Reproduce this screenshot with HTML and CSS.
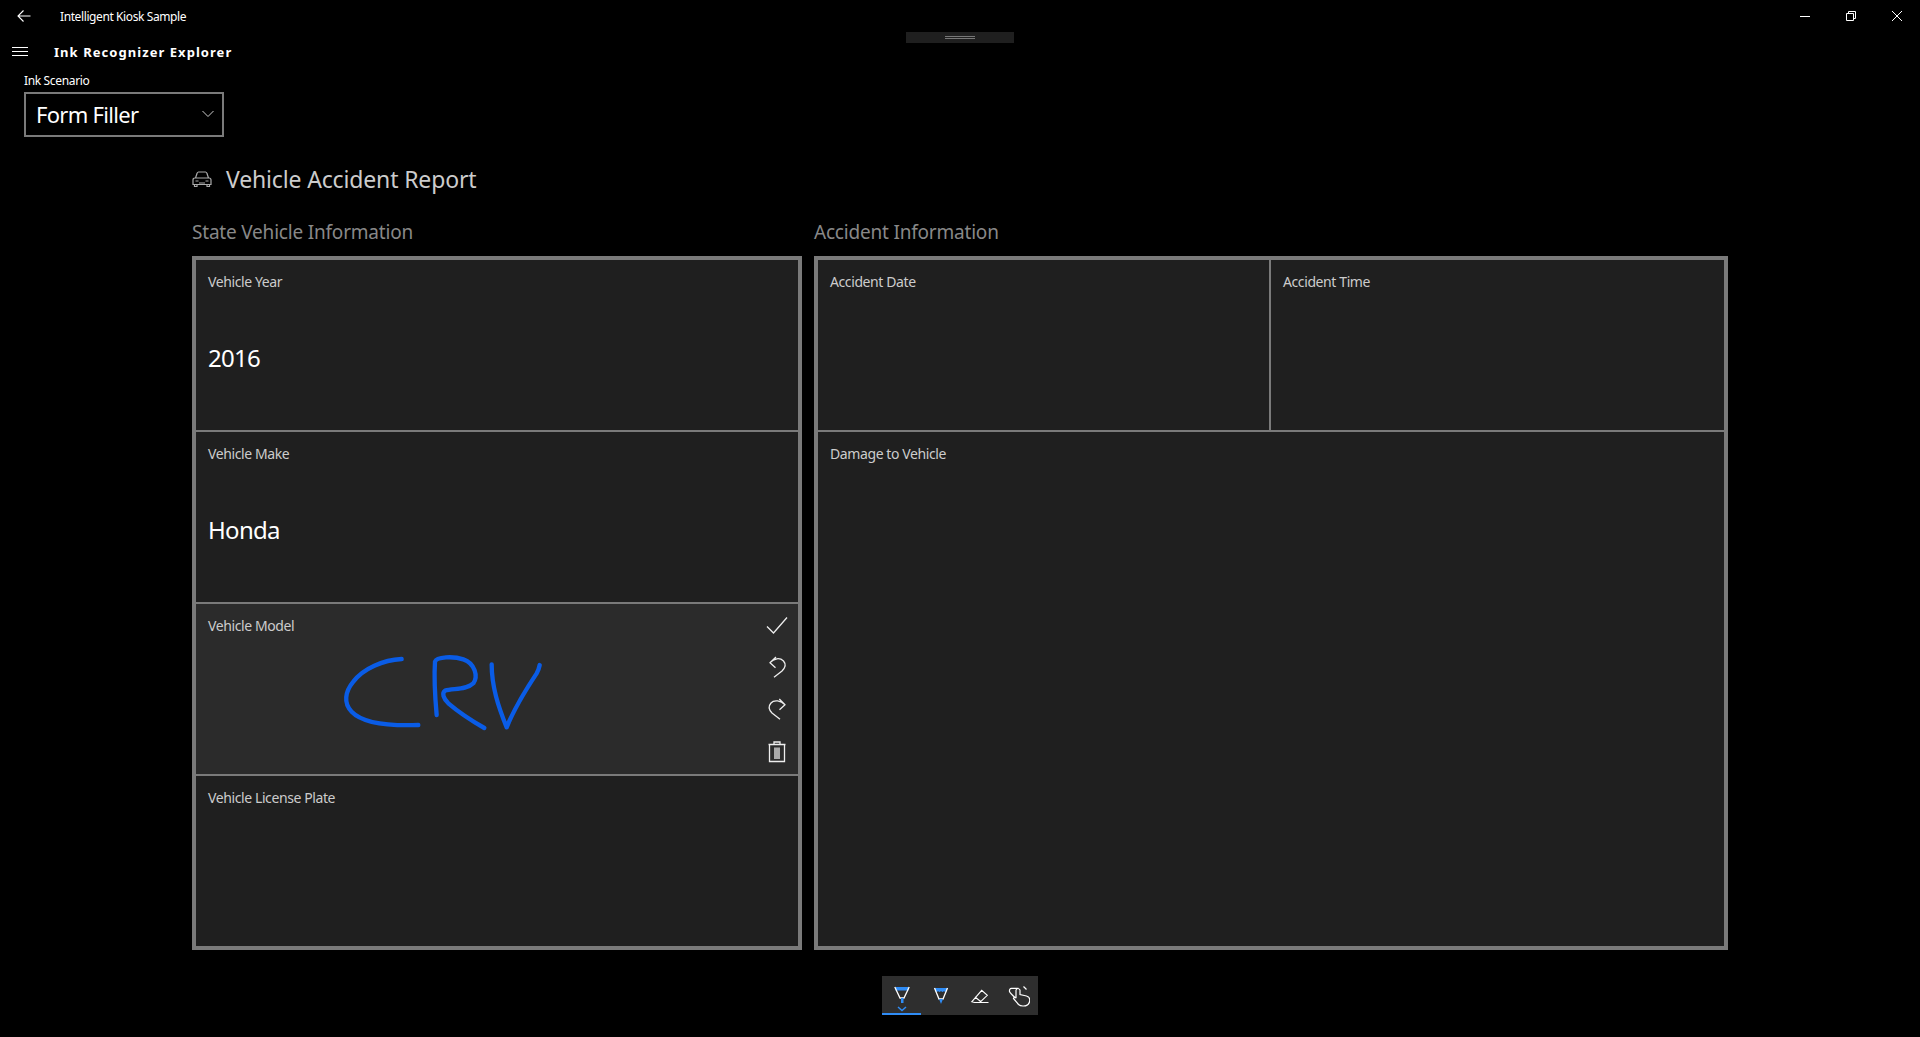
FILE: index.html
```html
<!DOCTYPE html>
<html lang="en">
<head>
  <meta charset="UTF-8">
  <title>Intelligent Kiosk Sample</title>
  <link rel="stylesheet" href="styles.css">
</head>
<body>
  <div class="titlebar">
    <svg class="back" width="16" height="16" viewBox="0 0 16 16"><path d="M14.500 8H2M7.500 2.500 2 8l5.500 5.500" fill="none" stroke="#fff" stroke-width="1.100"/></svg>
    <span class="app-name">Intelligent Kiosk Sample</span>
    <div class="window-buttons">
      <svg width="12" height="12" viewBox="0 0 12 12"><path d="M1 6.500h10" stroke="#fff" fill="none"/></svg>
      <svg width="12" height="12" viewBox="0 0 12 12"><path d="M1.500 3.500h7v7h-7zM3.500 3.500v-2h7v7h-2" stroke="#fff" fill="none"/></svg>
      <svg width="12" height="12" viewBox="0 0 12 12"><path d="M1 1l10 10M11 1 1 11" stroke="#fff" fill="none"/></svg>
    </div>
  </div>
  <div class="drag-handle"><span></span></div>

  <div class="navbar">
    <svg width="16" height="12" viewBox="0 0 16 12"><path d="M0 1.500h16M0 5.500h16M0 9.500h16" stroke="#fff" fill="none"/></svg>
    <span class="nav-title">Ink Recognizer Explorer</span>
  </div>

  <div class="scenario">
    <label>Ink Scenario</label>
    <div class="combo">
      <span>Form Filler</span>
      <svg width="12" height="8" viewBox="0 0 12 8"><path d="M.5 1 6 6.500 11.500 1" stroke="#ccc" fill="none"/></svg>
    </div>
  </div>

  <main class="report">
    <h1 class="report-title">
      <svg width="20" height="16" viewBox="0 0 20 16"><path d="M3.500 7 5 2.500Q5.200 1.200 6.500 1H13.500Q14.800 1.200 15 2.500L16.500 7M1 9Q1 7 3 7H17Q19 7 19 9V13.500H1ZM2.500 13.500V15.500H5V13.500M15 13.500V15.500H17.500V13.500M3.500 10H6.500M13.500 10H16.500M7 12H13" fill="none" stroke="#aaa" stroke-width="1.200"/></svg>
      Vehicle Accident Report
    </h1>
    <div class="columns">
      <section>
        <h2>State Vehicle Information</h2>
        <div class="panel panel-left">
          <div class="field">
            <span class="field-label">Vehicle Year</span>
            <span class="field-value">2016</span>
          </div>
          <div class="field">
            <span class="field-label">Vehicle Make</span>
            <span class="field-value">Honda</span>
          </div>
          <div class="field field-active">
            <span class="field-label">Vehicle Model</span>
            <svg class="ink" width="500" height="190" viewBox="0 0 1500 570">
              <path d="M245 177C190 180 130 205 100 245 75 275 70 310 95 335 130 372 210 378 295 375"/>
              <path d="M350 345C345 290 342 230 345 185 350 170 400 168 430 178 465 190 475 230 460 250 440 270 400 265 375 272 365 280 370 295 385 310 420 340 460 365 493 384"/>
              <path d="M515 193C515 260 535 320 560 382 585 320 620 265 650 220 657 208 658 200 659 195"/>
            </svg>
            <div class="ink-tools">
              <svg width="24" height="24" viewBox="0 0 24 24"><path d="M2 13.500 8.500 20 22 4.500"/></svg>
              <svg width="24" height="24" viewBox="0 0 24 24"><path d="M11 2 5 7.700l5.500 5M5 7.700C9 3 15 2.500 18.500 6 21.500 9.500 20 13 17 16L9 22.300"/></svg>
              <svg width="24" height="24" viewBox="0 0 24 24"><path d="M14.300 2 20 7.700l-5.500 5M20 7.700C16 3.500 9 2.500 6 6 3 9.500 4 13 7 16L15 22.300"/></svg>
              <svg width="24" height="24" viewBox="0 0 24 24"><path d="M3.500 5.500H20.500M4.500 5.500V22.500H19.500V5.500M9 5.500V3H15V5.500M10 8.500V20M12 8.500V20M14 8.500V20"/></svg>
            </div>
          </div>
          <div class="field">
            <span class="field-label">Vehicle License Plate</span>
          </div>
        </div>
      </section>
      <section>
        <h2>Accident Information</h2>
        <div class="panel panel-right">
          <div class="field"><span class="field-label">Accident Date</span></div>
          <div class="field"><span class="field-label">Accident Time</span></div>
          <div class="field field-damage"><span class="field-label">Damage to Vehicle</span></div>
        </div>
      </section>
    </div>
  </main>

  <div class="toolbar">
    <div class="tool tool-selected">
      <svg width="20" height="22" viewBox="0 0 20 22">
        <path d="M3.500 3h13v3.500h-13z" fill="#2f8cf5"/>
        <path d="M2.800 3 8 14h4l5.200-11" fill="none" stroke="#fff" stroke-width="1.300"/>
        <path d="M9 14h2.500v5H9z" fill="#2f8cf5"/>
      </svg>
      <svg class="tool-caret" width="10" height="6" viewBox="0 0 10 6"><path d="M1 1l4 3.500L9 1" fill="none" stroke="#2f8cf5" stroke-width="1.500"/></svg>
    </div>
    <div class="tool">
      <svg width="20" height="22" viewBox="0 0 20 22">
        <path d="M4 3h12v3c-2 1.200-2 1.200-3 0-1.500 1.200-1.500 1.200-3 0-1.500 1.200-1.500 1.200-3 0-1 1.200-1 1.200-3 0z" fill="#2f8cf5"/>
        <path d="M3.500 3 8 14h4l4.500-11" fill="none" stroke="#fff" stroke-width="1.300"/>
        <path d="M8 14h4l-2 5z" fill="#2f8cf5"/>
      </svg>
    </div>
    <div class="tool">
      <svg width="20" height="18" viewBox="0 0 20 18">
        <path d="M1.700 14.800 11.700 3.300l5.600 5-7.500 7.200H4.500zM5 10l6 4.700M8.500 15.500h10" fill="none" stroke="#fff" stroke-width="1.100"/>
      </svg>
    </div>
    <div class="tool">
      <svg width="22" height="22" viewBox="0 0 22 22">
        <path d="M10.500 3.300H3.500Q1.200 3.500 1.500 6.500 2 8 7.500 13M8 13.300V5Q10 2 12 5V9.500L18.500 11Q21.800 12 21.800 15 21.500 21 15.500 21 12.500 21.200 10.500 19.500L5.500 13.500Q6 11.500 8 12.500M15.500 1.500 18.500 4.500" fill="none" stroke="#fff" stroke-width="1.200"/>
      </svg>
    </div>
  </div>
</body>
</html>
```

FILE: styles.css
```css
* {
  box-sizing: border-box;
}
body {
  margin: 0;
  height: 100vh;
  overflow: hidden;
  background: #000;
  color: #fff;
  font-family: "Noto Sans", "Open Sans", sans-serif;
  display: flex;
  flex-direction: column;
}
.titlebar {
  height: 32px;
  display: flex;
  align-items: center;
  padding-left: 16px;
}
.back {
  flex: none;
}
.app-name {
  margin-left: 28px;
  font-size: 12px;
  letter-spacing: -.4px;
}
.window-buttons {
  margin-left: auto;
  display: flex;
  gap: 34px;
  padding-right: 17px;
}
.drag-handle {
  position: absolute;
  left: 906px;
  top: 32px;
  width: 108px;
  height: 11px;
  background: #1f1f1f;
  display: flex;
  align-items: center;
  justify-content: center;
}
.drag-handle span {
  width: 30px;
  height: 3px;
  border-top: 1px solid #777;
  border-bottom: 1px solid #777;
}
.navbar {
  height: 41px;
  display: flex;
  align-items: center;
  padding: 0 12px 2px;
}
.nav-title {
  margin-left: 26px;
  font-size: 13px;
  font-weight: 700;
  letter-spacing: 1.05px;
}
.scenario {
  padding-left: 24px;
}
.scenario label {
  display: block;
  font-size: 12px;
  line-height: 16px;
  letter-spacing: -.35px;
  margin-bottom: 3px;
}
.combo {
  width: 200px;
  height: 45px;
  border: 2px solid #7a7a7a;
  display: flex;
  align-items: center;
  justify-content: space-between;
  padding: 0 8px 1px 10px;
  font-size: 22px;
  letter-spacing: -.7px;
}
.report {
  padding-left: 192px;
  margin-top: 24px;
}
.report-title {
  display: flex;
  align-items: center;
  gap: 14px;
  margin: 0;
  height: 36px;
  font-size: 23px;
  font-weight: 400;
  letter-spacing: -.15px;
  color: #ccc;
}
.columns {
  display: grid;
  grid-template-columns: 610px 914px;
  gap: 12px;
  margin-top: 21px;
}
h2 {
  margin: 0;
  height: 38px;
  font-size: 19px;
  line-height: 28px;
  font-weight: 400;
  letter-spacing: -.2px;
  color: #888;
}
.panel {
  height: 694px;
  border: 4px solid #7a7a7a;
  background: #7a7a7a;
  display: grid;
  gap: 2px;
}
.panel-left {
  grid-template-rows: repeat(4, 170px);
}
.panel-right {
  grid-template-columns: 451px 1fr;
  grid-template-rows: 170px 1fr;
}
.field {
  position: relative;
  background: #1f1f1f;
  padding: 12px;
  display: flex;
  flex-direction: column;
}
.field-damage {
  grid-column: span 2;
}
.field-active {
  background: #2b2b2b;
}
.field-label {
  font-size: 14px;
  line-height: 20px;
  letter-spacing: -.4px;
  color: #ccc;
}
.field-value {
  margin-top: 50px;
  font-size: 24px;
  line-height: 32px;
  letter-spacing: -.7px;
}
.ink {
  position: absolute;
  left: 124px;
  top: -4px;
}
.ink path {
  fill: none;
  stroke: #0a5ce6;
  stroke-width: 13;
  stroke-linecap: round;
  stroke-linejoin: round;
}
.ink-tools {
  position: absolute;
  right: 9px;
  top: 9px;
  display: flex;
  flex-direction: column;
  gap: 18px;
}
.ink-tools svg {
  display: block;
}
.ink-tools path {
  fill: none;
  stroke: #eee;
  stroke-width: 1.300;
}
.toolbar {
  position: absolute;
  left: 882px;
  top: 976px;
  display: flex;
  height: 39px;
  background: #2e2e2e;
}
.tool {
  position: relative;
  width: 39px;
  height: 39px;
  display: flex;
  align-items: center;
  justify-content: center;
}
.tool-selected {
  border-bottom: 2px solid #2f8cf5;
}
.tool-caret {
  position: absolute;
  left: 15px;
  bottom: 1px;
}
```
